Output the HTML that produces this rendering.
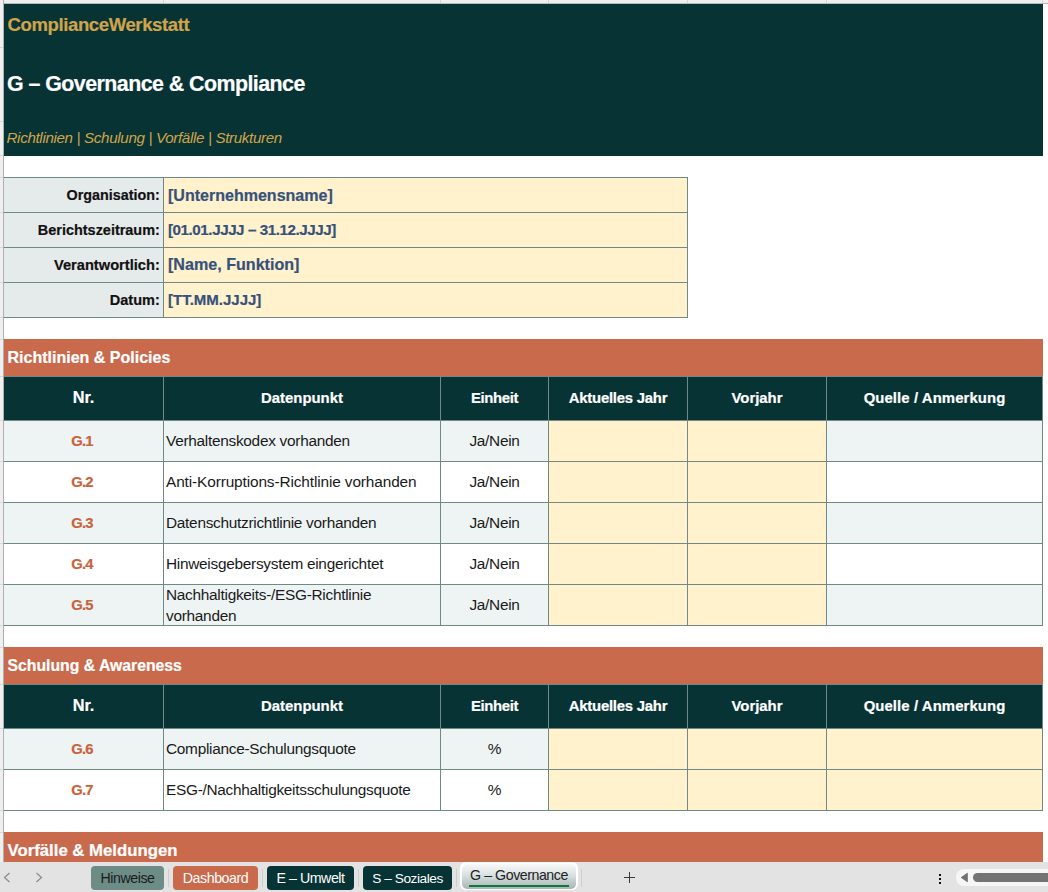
<!DOCTYPE html>
<html><head><meta charset="utf-8"><style>
html,body{margin:0;padding:0;}
body{width:1048px;height:892px;overflow:hidden;position:relative;background:#fff;font-family:"Liberation Sans",sans-serif;}
.a{position:absolute;}
.t{position:absolute;white-space:nowrap;line-height:1.15;}
</style></head><body>
<div class="a" style="left:4px;top:4px;width:1039px;height:152px;background:#073335"></div><div class="t" style="left:7.6px;top:13.95px;font-size:18.5px;font-weight:bold;color:#CFA44B;letter-spacing:-0.38px;-webkit-text-stroke:0.2px currentColor">ComplianceWerkstatt</div><div class="t" style="left:7px;top:72.08px;font-size:21.4px;font-weight:bold;color:#fff;letter-spacing:-0.55px;-webkit-text-stroke:0.2px currentColor">G – Governance &amp; Compliance</div><div class="t" style="left:6.5px;top:128.99px;font-size:15.2px;font-style:italic;color:#CFA44B;letter-spacing:-0.35px">Richtlinien | Schulung | Vorfälle | Strukturen</div><div class="a" style="left:4px;top:177px;width:159px;height:35px;background:#E5EAEA"></div><div class="a" style="left:164px;top:177px;width:523px;height:35px;background:#FFF2CC"></div><div class="t" style="right:888.2px;top:187.08px;text-align:right;font-size:14.35px;font-weight:bold;color:#111;-webkit-text-stroke:0.2px currentColor">Organisation:</div><div class="t" style="left:168px;top:185.51px;font-size:16.05px;font-weight:bold;color:#36517A;-webkit-text-stroke:0.2px currentColor">[Unternehmensname]</div><div class="a" style="left:4px;top:212px;width:159px;height:35px;background:#E5EAEA"></div><div class="a" style="left:164px;top:212px;width:523px;height:35px;background:#FFF2CC"></div><div class="t" style="right:888.2px;top:221.99px;text-align:right;font-size:14.44px;font-weight:bold;color:#111;-webkit-text-stroke:0.2px currentColor">Berichtszeitraum:</div><div class="t" style="left:168px;top:221.29px;font-size:15.2px;font-weight:bold;color:#36517A;letter-spacing:-0.45px;-webkit-text-stroke:0.2px currentColor">[01.01.JJJJ – 31.12.JJJJ]</div><div class="a" style="left:4px;top:247px;width:159px;height:35px;background:#E5EAEA"></div><div class="a" style="left:164px;top:247px;width:523px;height:35px;background:#FFF2CC"></div><div class="t" style="right:888.2px;top:256.78px;text-align:right;font-size:14.67px;font-weight:bold;color:#111;-webkit-text-stroke:0.2px currentColor">Verantwortlich:</div><div class="t" style="left:168px;top:255.46px;font-size:16.1px;font-weight:bold;color:#36517A;-webkit-text-stroke:0.2px currentColor">[Name, Funktion]</div><div class="a" style="left:4px;top:282px;width:159px;height:35px;background:#E5EAEA"></div><div class="a" style="left:164px;top:282px;width:523px;height:35px;background:#FFF2CC"></div><div class="t" style="right:888.2px;top:291.92px;text-align:right;font-size:14.52px;font-weight:bold;color:#111;-webkit-text-stroke:0.2px currentColor">Datum:</div><div class="t" style="left:168px;top:291.48px;font-size:15.0px;font-weight:bold;color:#36517A;-webkit-text-stroke:0.2px currentColor">[TT.MM.JJJJ]</div><div class="a" style="left:4px;top:177px;width:684px;height:1px;background:#6F8A85"></div><div class="a" style="left:4px;top:212px;width:684px;height:1px;background:#6F8A85"></div><div class="a" style="left:4px;top:247px;width:684px;height:1px;background:#6F8A85"></div><div class="a" style="left:4px;top:282px;width:684px;height:1px;background:#6F8A85"></div><div class="a" style="left:4px;top:317px;width:684px;height:1px;background:#6F8A85"></div><div class="a" style="left:163px;top:177px;width:1px;height:141px;background:#6F8A85"></div><div class="a" style="left:687px;top:177px;width:1px;height:141px;background:#6F8A85"></div><div class="a" style="left:4px;top:339px;width:1039px;height:37px;background:#C96A4C"></div><div class="t" style="left:7.5px;top:348.24px;font-size:16.02px;font-weight:bold;color:#fff;-webkit-text-stroke:0.2px currentColor">Richtlinien &amp; Policies</div><div class="a" style="left:4px;top:376px;width:1039px;height:44px;background:#073335"></div><div class="t" style="left:4px;top:388.38px;width:159px;text-align:center;font-size:16.3px;font-weight:bold;color:#fff;letter-spacing:0px;-webkit-text-stroke:0.2px currentColor">Nr.</div><div class="t" style="left:164px;top:389.67px;width:276px;text-align:center;font-size:14.9px;font-weight:bold;color:#fff;letter-spacing:0px;-webkit-text-stroke:0.2px currentColor">Datenpunkt</div><div class="t" style="left:441px;top:389.67px;width:107px;text-align:center;font-size:14.9px;font-weight:bold;color:#fff;letter-spacing:-0.35px;-webkit-text-stroke:0.2px currentColor">Einheit</div><div class="t" style="left:549px;top:389.67px;width:138px;text-align:center;font-size:14.9px;font-weight:bold;color:#fff;letter-spacing:-0.24px;-webkit-text-stroke:0.2px currentColor">Aktuelles Jahr</div><div class="t" style="left:688px;top:389.67px;width:138px;text-align:center;font-size:14.9px;font-weight:bold;color:#fff;letter-spacing:0px;-webkit-text-stroke:0.2px currentColor">Vorjahr</div><div class="t" style="left:827px;top:389.67px;width:215px;text-align:center;font-size:14.9px;font-weight:bold;color:#fff;letter-spacing:0.09px;-webkit-text-stroke:0.2px currentColor">Quelle / Anmerkung</div><div class="a" style="left:4px;top:420px;width:1039px;height:41px;background:#EEF4F4"></div><div class="a" style="left:549px;top:420px;width:278px;height:41px;background:#FFF2CC"></div><div class="t" style="left:2.5px;top:432.76px;width:159.0px;text-align:center;font-size:14.8px;font-weight:bold;color:#C8633C;letter-spacing:-0.8px;-webkit-text-stroke:0.2px currentColor">G.1</div><div class="t" style="left:166px;top:431.71px;font-size:15.4px;color:#1a1a1a;letter-spacing:-0.28px">Verhaltenskodex vorhanden</div><div class="t" style="left:441px;top:431.71px;width:107px;text-align:center;font-size:15.4px;color:#1a1a1a;letter-spacing:-0.28px">Ja/Nein</div><div class="a" style="left:4px;top:461px;width:1039px;height:41px;background:#ffffff"></div><div class="a" style="left:549px;top:461px;width:278px;height:41px;background:#FFF2CC"></div><div class="t" style="left:2.5px;top:473.76px;width:159.0px;text-align:center;font-size:14.8px;font-weight:bold;color:#C8633C;letter-spacing:-0.8px;-webkit-text-stroke:0.2px currentColor">G.2</div><div class="t" style="left:166px;top:472.71px;font-size:15.4px;color:#1a1a1a;letter-spacing:-0.12px">Anti-Korruptions-Richtlinie vorhanden</div><div class="t" style="left:441px;top:472.71px;width:107px;text-align:center;font-size:15.4px;color:#1a1a1a;letter-spacing:-0.28px">Ja/Nein</div><div class="a" style="left:4px;top:502px;width:1039px;height:41px;background:#EEF4F4"></div><div class="a" style="left:549px;top:502px;width:278px;height:41px;background:#FFF2CC"></div><div class="t" style="left:2.5px;top:514.76px;width:159.0px;text-align:center;font-size:14.8px;font-weight:bold;color:#C8633C;letter-spacing:-0.8px;-webkit-text-stroke:0.2px currentColor">G.3</div><div class="t" style="left:166px;top:513.71px;font-size:15.4px;color:#1a1a1a;letter-spacing:-0.28px">Datenschutzrichtlinie vorhanden</div><div class="t" style="left:441px;top:513.71px;width:107px;text-align:center;font-size:15.4px;color:#1a1a1a;letter-spacing:-0.28px">Ja/Nein</div><div class="a" style="left:4px;top:543px;width:1039px;height:41px;background:#ffffff"></div><div class="a" style="left:549px;top:543px;width:278px;height:41px;background:#FFF2CC"></div><div class="t" style="left:2.5px;top:555.76px;width:159.0px;text-align:center;font-size:14.8px;font-weight:bold;color:#C8633C;letter-spacing:-0.8px;-webkit-text-stroke:0.2px currentColor">G.4</div><div class="t" style="left:166px;top:554.71px;font-size:15.4px;color:#1a1a1a;letter-spacing:-0.28px">Hinweisgebersystem eingerichtet</div><div class="t" style="left:441px;top:554.71px;width:107px;text-align:center;font-size:15.4px;color:#1a1a1a;letter-spacing:-0.28px">Ja/Nein</div><div class="a" style="left:4px;top:584px;width:1039px;height:41px;background:#EEF4F4"></div><div class="a" style="left:549px;top:584px;width:278px;height:41px;background:#FFF2CC"></div><div class="t" style="left:2.5px;top:596.76px;width:159.0px;text-align:center;font-size:14.8px;font-weight:bold;color:#C8633C;letter-spacing:-0.8px;-webkit-text-stroke:0.2px currentColor">G.5</div><div class="t" style="left:166px;top:586.41px;font-size:15.4px;color:#1a1a1a;letter-spacing:-0.28px">Nachhaltigkeits-/ESG-Richtlinie</div><div class="t" style="left:166px;top:606.71px;font-size:15.4px;color:#1a1a1a;letter-spacing:-0.28px">vorhanden</div><div class="t" style="left:441px;top:595.71px;width:107px;text-align:center;font-size:15.4px;color:#1a1a1a;letter-spacing:-0.28px">Ja/Nein</div><div class="a" style="left:4px;top:376px;width:1039px;height:1px;background:#6F8A85"></div><div class="a" style="left:4px;top:420px;width:1039px;height:1px;background:#6F8A85"></div><div class="a" style="left:4px;top:461px;width:1039px;height:1px;background:#6F8A85"></div><div class="a" style="left:4px;top:502px;width:1039px;height:1px;background:#6F8A85"></div><div class="a" style="left:4px;top:543px;width:1039px;height:1px;background:#6F8A85"></div><div class="a" style="left:4px;top:584px;width:1039px;height:1px;background:#6F8A85"></div><div class="a" style="left:4px;top:625px;width:1039px;height:1px;background:#6F8A85"></div><div class="a" style="left:163px;top:376px;width:1px;height:250px;background:#6F8A85"></div><div class="a" style="left:440px;top:376px;width:1px;height:250px;background:#6F8A85"></div><div class="a" style="left:548px;top:376px;width:1px;height:250px;background:#6F8A85"></div><div class="a" style="left:687px;top:376px;width:1px;height:250px;background:#6F8A85"></div><div class="a" style="left:826px;top:376px;width:1px;height:250px;background:#6F8A85"></div><div class="a" style="left:1042px;top:376px;width:1px;height:250px;background:#6F8A85"></div><div class="a" style="left:4px;top:647px;width:1039px;height:37px;background:#C96A4C"></div><div class="t" style="left:7.5px;top:657.17px;font-size:15.77px;font-weight:bold;color:#fff;-webkit-text-stroke:0.2px currentColor">Schulung &amp; Awareness</div><div class="a" style="left:4px;top:684px;width:1039px;height:44px;background:#073335"></div><div class="t" style="left:4px;top:696.38px;width:159px;text-align:center;font-size:16.3px;font-weight:bold;color:#fff;letter-spacing:0px;-webkit-text-stroke:0.2px currentColor">Nr.</div><div class="t" style="left:164px;top:697.67px;width:276px;text-align:center;font-size:14.9px;font-weight:bold;color:#fff;letter-spacing:0px;-webkit-text-stroke:0.2px currentColor">Datenpunkt</div><div class="t" style="left:441px;top:697.67px;width:107px;text-align:center;font-size:14.9px;font-weight:bold;color:#fff;letter-spacing:-0.35px;-webkit-text-stroke:0.2px currentColor">Einheit</div><div class="t" style="left:549px;top:697.67px;width:138px;text-align:center;font-size:14.9px;font-weight:bold;color:#fff;letter-spacing:-0.24px;-webkit-text-stroke:0.2px currentColor">Aktuelles Jahr</div><div class="t" style="left:688px;top:697.67px;width:138px;text-align:center;font-size:14.9px;font-weight:bold;color:#fff;letter-spacing:0px;-webkit-text-stroke:0.2px currentColor">Vorjahr</div><div class="t" style="left:827px;top:697.67px;width:215px;text-align:center;font-size:14.9px;font-weight:bold;color:#fff;letter-spacing:0.09px;-webkit-text-stroke:0.2px currentColor">Quelle / Anmerkung</div><div class="a" style="left:4px;top:728px;width:1039px;height:41px;background:#EEF4F4"></div><div class="a" style="left:549px;top:728px;width:278px;height:41px;background:#FFF2CC"></div><div class="a" style="left:827px;top:728px;width:215px;height:41px;background:#FFF2CC"></div><div class="t" style="left:2.5px;top:740.76px;width:159.0px;text-align:center;font-size:14.8px;font-weight:bold;color:#C8633C;letter-spacing:-0.8px;-webkit-text-stroke:0.2px currentColor">G.6</div><div class="t" style="left:166px;top:739.71px;font-size:15.4px;color:#1a1a1a;letter-spacing:-0.28px">Compliance-Schulungsquote</div><div class="t" style="left:441px;top:739.71px;width:107px;text-align:center;font-size:15.4px;color:#1a1a1a;letter-spacing:-0.28px">%</div><div class="a" style="left:4px;top:769px;width:1039px;height:41px;background:#ffffff"></div><div class="a" style="left:549px;top:769px;width:278px;height:41px;background:#FFF2CC"></div><div class="a" style="left:827px;top:769px;width:215px;height:41px;background:#FFF2CC"></div><div class="t" style="left:2.5px;top:781.76px;width:159.0px;text-align:center;font-size:14.8px;font-weight:bold;color:#C8633C;letter-spacing:-0.8px;-webkit-text-stroke:0.2px currentColor">G.7</div><div class="t" style="left:166px;top:780.71px;font-size:15.4px;color:#1a1a1a;letter-spacing:-0.28px">ESG-/Nachhaltigkeitsschulungsquote</div><div class="t" style="left:441px;top:780.71px;width:107px;text-align:center;font-size:15.4px;color:#1a1a1a;letter-spacing:-0.28px">%</div><div class="a" style="left:4px;top:684px;width:1039px;height:1px;background:#6F8A85"></div><div class="a" style="left:4px;top:728px;width:1039px;height:1px;background:#6F8A85"></div><div class="a" style="left:4px;top:769px;width:1039px;height:1px;background:#6F8A85"></div><div class="a" style="left:4px;top:810px;width:1039px;height:1px;background:#6F8A85"></div><div class="a" style="left:163px;top:684px;width:1px;height:127px;background:#6F8A85"></div><div class="a" style="left:440px;top:684px;width:1px;height:127px;background:#6F8A85"></div><div class="a" style="left:548px;top:684px;width:1px;height:127px;background:#6F8A85"></div><div class="a" style="left:687px;top:684px;width:1px;height:127px;background:#6F8A85"></div><div class="a" style="left:826px;top:684px;width:1px;height:127px;background:#6F8A85"></div><div class="a" style="left:1042px;top:684px;width:1px;height:127px;background:#6F8A85"></div><div class="a" style="left:4px;top:832px;width:1039px;height:37px;background:#C96A4C"></div><div class="t" style="left:7.5px;top:840.86px;font-size:16.75px;font-weight:bold;color:#fff;-webkit-text-stroke:0.2px currentColor">Vorfälle &amp; Meldungen</div><div class="a" style="left:0px;top:0px;width:1048px;height:3px;background:#efefef"></div><div class="a" style="left:0px;top:3px;width:1048px;height:1px;background:#b9b9b9"></div><div class="a" style="left:0px;top:0px;width:3px;height:892px;background:#efefef"></div><div class="a" style="left:3px;top:0px;width:1px;height:892px;background:#b0b0b0"></div><div class="a" style="left:163px;top:0px;width:1px;height:3px;background:#d6d6d6"></div><div class="a" style="left:440px;top:0px;width:1px;height:3px;background:#d6d6d6"></div><div class="a" style="left:548px;top:0px;width:1px;height:3px;background:#d6d6d6"></div><div class="a" style="left:687px;top:0px;width:1px;height:3px;background:#d6d6d6"></div><div class="a" style="left:826px;top:0px;width:1px;height:3px;background:#d6d6d6"></div><div class="a" style="left:1042px;top:0px;width:1px;height:3px;background:#d6d6d6"></div><div class="a" style="left:0px;top:47px;width:3px;height:1px;background:#d6d6d6"></div><div class="a" style="left:0px;top:121px;width:3px;height:1px;background:#d6d6d6"></div><div class="a" style="left:0px;top:155px;width:3px;height:1px;background:#d6d6d6"></div><div class="a" style="left:0px;top:177px;width:3px;height:1px;background:#d6d6d6"></div><div class="a" style="left:0px;top:212px;width:3px;height:1px;background:#d6d6d6"></div><div class="a" style="left:0px;top:247px;width:3px;height:1px;background:#d6d6d6"></div><div class="a" style="left:0px;top:282px;width:3px;height:1px;background:#d6d6d6"></div><div class="a" style="left:0px;top:317px;width:3px;height:1px;background:#d6d6d6"></div><div class="a" style="left:0px;top:339px;width:3px;height:1px;background:#d6d6d6"></div><div class="a" style="left:0px;top:376px;width:3px;height:1px;background:#d6d6d6"></div><div class="a" style="left:0px;top:420px;width:3px;height:1px;background:#d6d6d6"></div><div class="a" style="left:0px;top:461px;width:3px;height:1px;background:#d6d6d6"></div><div class="a" style="left:0px;top:502px;width:3px;height:1px;background:#d6d6d6"></div><div class="a" style="left:0px;top:543px;width:3px;height:1px;background:#d6d6d6"></div><div class="a" style="left:0px;top:584px;width:3px;height:1px;background:#d6d6d6"></div><div class="a" style="left:0px;top:625px;width:3px;height:1px;background:#d6d6d6"></div><div class="a" style="left:0px;top:647px;width:3px;height:1px;background:#d6d6d6"></div><div class="a" style="left:0px;top:684px;width:3px;height:1px;background:#d6d6d6"></div><div class="a" style="left:0px;top:728px;width:3px;height:1px;background:#d6d6d6"></div><div class="a" style="left:0px;top:769px;width:3px;height:1px;background:#d6d6d6"></div><div class="a" style="left:0px;top:810px;width:3px;height:1px;background:#d6d6d6"></div><div class="a" style="left:0px;top:832px;width:3px;height:1px;background:#d6d6d6"></div><div class="a" style="left:0px;top:862px;width:1048px;height:30px;background:#e3e3e3"></div><svg class="a" style="left:0;top:862px" width="60" height="30"><path d="M9.5 11 L4.5 15.5 L9.5 20" fill="none" stroke="#8a8a8a" stroke-width="1.2"/><path d="M36.5 11 L41.5 15.5 L36.5 20" fill="none" stroke="#8a8a8a" stroke-width="1.2"/></svg><div class="a" style="left:91px;top:866px;width:73px;height:24px;background:#6C8C85;border-radius:4px"></div><div class="t" style="left:91px;top:870.21px;width:73px;text-align:center;font-size:14.2px;color:#1b1b1b;letter-spacing:-0.45px">Hinweise</div><div class="a" style="left:173px;top:866px;width:85px;height:24px;background:#C96A4C;border-radius:4px"></div><div class="t" style="left:173px;top:870.21px;width:85px;text-align:center;font-size:14.2px;color:#fff;letter-spacing:-0.45px">Dashboard</div><div class="a" style="left:267px;top:866px;width:87px;height:24px;background:#073335;border-radius:4px"></div><div class="t" style="left:267px;top:870.21px;width:87px;text-align:center;font-size:14.2px;color:#fff;letter-spacing:-0.45px">E – Umwelt</div><div class="a" style="left:363px;top:866px;width:89px;height:24px;background:#073335;border-radius:4px"></div><div class="t" style="left:363px;top:870.68px;width:89px;text-align:center;font-size:13.7px;color:#fff;letter-spacing:-0.45px">S – Soziales</div><div class="a" style="left:168px;top:869px;width:1px;height:18px;background:#cdcdcd"></div><div class="a" style="left:262px;top:869px;width:1px;height:18px;background:#cdcdcd"></div><div class="a" style="left:358px;top:869px;width:1px;height:18px;background:#cdcdcd"></div><div class="a" style="left:460px;top:862px;width:118px;height:28px;border-radius:6px;background:#fff"></div><div class="a" style="left:462px;top:864px;width:114px;height:25px;border-radius:5px;background:linear-gradient(#f8f9f9,#d9e0e0 45%,#a6b4b5)"></div><div class="a" style="left:456px;top:869px;width:1px;height:18px;background:#cdcdcd"></div><div class="t" style="left:462px;top:867.11px;width:114px;text-align:center;font-size:14.2px;color:#222;letter-spacing:-0.45px">G – Governance</div><div class="a" style="left:469px;top:885px;width:100px;height:2px;background:#0f7a37"></div><div class="a" style="left:581px;top:869px;width:1px;height:18px;background:#cdcdcd"></div><div class="a" style="left:629px;top:872px;width:1px;height:11px;background:#3a3a3a"></div><div class="a" style="left:624px;top:877px;width:11px;height:1px;background:#3a3a3a"></div><div class="a" style="left:939px;top:874px;width:2px;height:2px;background:#111"></div><div class="a" style="left:939px;top:878px;width:2px;height:2px;background:#111"></div><div class="a" style="left:939px;top:882px;width:2px;height:2px;background:#111"></div><div class="a" style="left:956px;top:869px;width:110px;height:17px;border-radius:8px;background:#f6f6f6"></div><svg class="a" style="left:958px;top:869px" width="14" height="17"><path d="M3.2 8.5 L9.4 4.2 V12.8 Z" fill="#6f6f6f" stroke="#6f6f6f" stroke-width="0.8" stroke-linejoin="round"/></svg><div class="a" style="left:973px;top:873px;width:100px;height:9px;border-radius:5px;background:#737373"></div>
</body></html>
